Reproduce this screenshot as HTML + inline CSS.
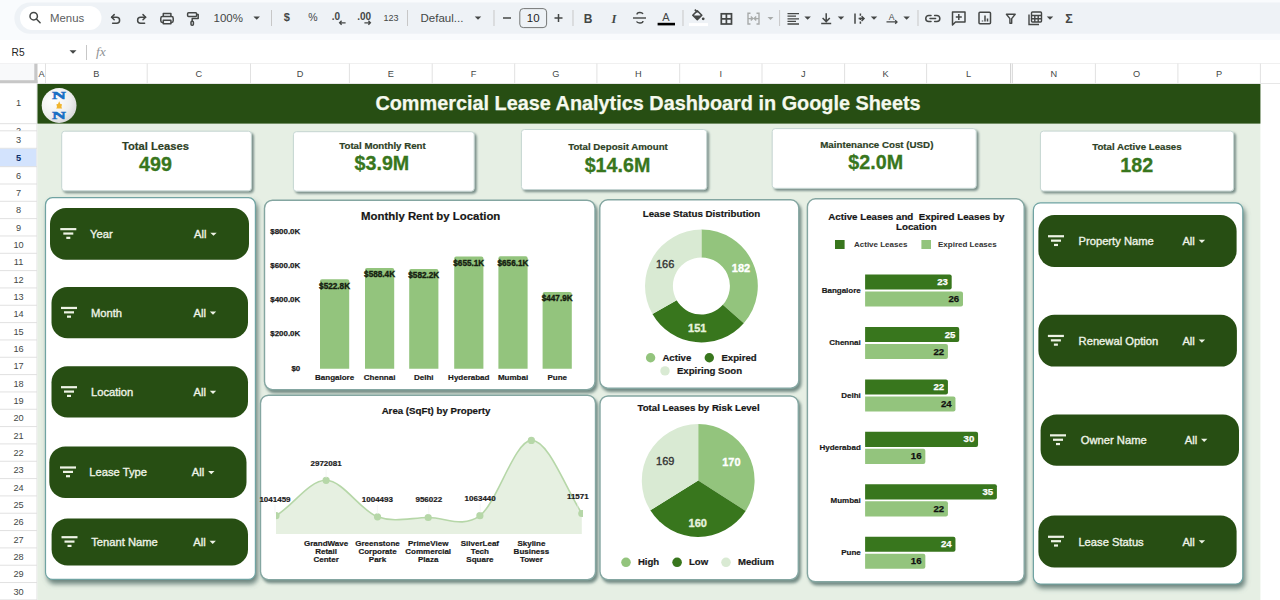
<!DOCTYPE html>
<html><head><meta charset="utf-8"><title>Commercial Lease Analytics Dashboard</title>
<style>
html,body{margin:0;padding:0;background:#ffffff;overflow:hidden;}
body{width:1280px;height:600px;font-family:"Liberation Sans", sans-serif;}
svg{display:block;}
</style></head><body>
<svg width="1280" height="600" viewBox="0 0 1280 600">
<rect x="0.00" y="0.00" width="1280.00" height="64.00" rx="0" fill="#f9fbfd" />
<path d="M30,2.5 H1280 V33.8 H30 A15.65,15.65 0 0 1 30,2.5 Z" fill="#eef2f6"/>
<rect x="20.00" y="6.00" width="81.50" height="24.00" rx="12" fill="#ffffff" />
<g stroke="#444746" stroke-width="1.5" fill="none"><circle cx="33.7" cy="16.2" r="3.7"/><line x1="36.4" y1="18.9" x2="40.1" y2="22.7" stroke-linecap="round"/></g>
<text x="50.00" y="21.80" font-size="11.4" fill="#5b5e61" font-weight="normal" text-anchor="start" style="font-family:'Liberation Sans', sans-serif;" >Menus</text>
<g stroke="#444746" stroke-width="1.5" fill="none" stroke-linecap="round" stroke-linejoin="round"><path d="M111.6,17.2 h5 a3,3 0 0 1 0,6 h-4"/><path d="M114.2,14.6 l-2.6,2.6 l2.6,2.6"/><path d="M145.6,17.2 h-5 a3,3 0 0 0 0,6 h4"/><path d="M143,14.6 l2.6,2.6 l-2.6,2.6"/></g>
<g stroke="#444746" stroke-width="1.5" fill="none" stroke-linejoin="round"><path d="M163.3,16.8 v-3.4 h7.6 v3.4"/><rect x="160.8" y="16.6" width="12.4" height="5.8" rx="1.6"/><path d="M163.3,20.2 h7.6 v3.6 h-7.6 z" fill="#eef2f6"/></g>
<g stroke="#444746" stroke-width="1.5" fill="none" stroke-linejoin="round"><rect x="187.6" y="12.8" width="9" height="3.6" rx="1"/><path d="M196.6,14.6 h1.6 v4 h-6 v2.6"/><rect x="191" y="21.2" width="2.4" height="4" rx="1"/></g>
<text x="213.50" y="22.40" font-size="11.5" fill="#444746" font-weight="normal" text-anchor="start" style="font-family:'Liberation Sans', sans-serif;" >100%</text>
<path d="M253.45,16.55 h6.5 l-3.25,3.3 z" fill="#444746"/>
<line x1="271.5" y1="10" x2="271.5" y2="26" stroke="#c7c7c7" stroke-width="1"/>
<text x="286.90" y="21.20" font-size="11" fill="#444746" font-weight="bold" text-anchor="middle" style="font-family:'Liberation Sans', sans-serif;" >$</text>
<text x="312.80" y="21.20" font-size="10.5" fill="#444746" font-weight="normal" text-anchor="middle" style="font-family:'Liberation Sans', sans-serif;" >%</text>
<text x="336.00" y="19.80" font-size="10" fill="#444746" font-weight="bold" text-anchor="middle" style="font-family:'Liberation Sans', sans-serif;" >.0</text>
<g stroke="#444746" stroke-width="1.3" fill="none"><path d="M345.6,22.8 h-6 m2,-2 l-2,2 l2,2"/></g>
<text x="364.20" y="19.80" font-size="10" fill="#444746" font-weight="bold" text-anchor="middle" style="font-family:'Liberation Sans', sans-serif;" >.00</text>
<g stroke="#444746" stroke-width="1.3" fill="none"><path d="M364.4,22.8 h6 m-2,-2 l2,2 l-2,2"/></g>
<text x="391.00" y="20.90" font-size="9.0" fill="#444746" font-weight="normal" text-anchor="middle" style="font-family:'Liberation Sans', sans-serif;" >123</text>
<line x1="407.5" y1="10" x2="407.5" y2="26" stroke="#c7c7c7" stroke-width="1"/>
<text x="420.50" y="22.00" font-size="11.5" fill="#444746" font-weight="normal" text-anchor="start" style="font-family:'Liberation Sans', sans-serif;" >Defaul...</text>
<path d="M474.75,16.55 h6.5 l-3.25,3.3 z" fill="#444746"/>
<line x1="494" y1="10" x2="494" y2="26" stroke="#c7c7c7" stroke-width="1"/>
<line x1="503" y1="18" x2="511" y2="18" stroke="#444746" stroke-width="1.5"/>
<rect x="519.8" y="8.6" width="26.8" height="19" rx="3.5" fill="none" stroke="#747775" stroke-width="1"/>
<text x="533.20" y="22.20" font-size="11.5" fill="#1f1f1f" font-weight="normal" text-anchor="middle" style="font-family:'Liberation Sans', sans-serif;" >10</text>
<path d="M554.5,18 h8 M558.5,14 v8" stroke="#444746" stroke-width="1.5"/>
<line x1="573" y1="10" x2="573" y2="26" stroke="#c7c7c7" stroke-width="1"/>
<text x="588.00" y="22.50" font-size="12" fill="#444746" font-weight="bold" text-anchor="middle" style="font-family:'Liberation Sans', sans-serif;" >B</text>
<text x="614.00" y="22.50" font-size="12.5" fill="#444746" font-weight="bold" text-anchor="middle" style="font-family:'Liberation Serif', serif;font-style:italic" >I</text>
<g stroke="#444746" stroke-width="1.4" fill="none"><path d="M633,18 h13"/><path d="M643,14 c-1,-2 -6,-2 -6,0.5"/><path d="M636.5,21.5 c1,2 6.5,2 6.5,-0.5"/></g>
<text x="666.00" y="21.00" font-size="11" fill="#444746" font-weight="normal" text-anchor="middle" style="font-family:'Liberation Sans', sans-serif;" >A</text>
<rect x="657.60" y="22.80" width="17.40" height="2.60" rx="0" fill="#000000" />
<line x1="683" y1="10" x2="683" y2="26" stroke="#c7c7c7" stroke-width="1"/>
<g stroke="#444746" stroke-width="1.6" fill="none" stroke-linejoin="round"><path d="M692.8,15.2 L697.3,10.8 L701.8,15.2 L697.3,19.6 Z"/><path d="M694.8,9.6 L697.6,12.4"/></g>
<path d="M693.6,15.6 h7.6 l-3.9,3.6 z" fill="#444746"/><circle cx="703.2" cy="18.8" r="1.4" fill="#444746"/>
<rect x="689.00" y="23.10" width="19.00" height="3.00" rx="0" fill="#ffffff" />
<g stroke="#444746" stroke-width="1.7" fill="none"><rect x="721.3" y="13.8" width="10.2" height="10.2"/><path d="M726.4,13.8 v10.2 M721.3,18.9 h10.2"/></g>
<g stroke="#a8abaa" stroke-width="1.4" fill="none"><path d="M750.5,13.2 h-2.5 v10.8 h2.5 M756.5,13.2 h2.5 v10.8 h-2.5 M748.5,18.6 h4 M750.8,16.6 l2,2 l-2,2 M758.5,18.6 h-4 M756.2,16.6 l-2,2 l2,2"/></g>
<path d="M767.50,16.90 h6 l-3.0,3 z" fill="#a8abaa"/>
<line x1="779.6" y1="10" x2="779.6" y2="26" stroke="#c7c7c7" stroke-width="1"/>
<g stroke="#444746" stroke-width="1.3"><path d="M787.5,13.6 h11.5 M787.5,16.2 h8.5 M787.5,18.8 h11.5 M787.5,21.4 h8.5 M787.5,24.0 h11.5"/></g>
<path d="M804.35,16.55 h6.5 l-3.25,3.3 z" fill="#444746"/>
<g stroke="#444746" stroke-width="1.5" fill="none"><path d="M826.2,13.2 v8 M822.6,18 l3.6,3.6 l3.6,-3.6 M821.2,23.6 h10"/></g>
<path d="M837.75,16.55 h6.5 l-3.25,3.3 z" fill="#444746"/>
<g stroke="#444746" stroke-width="1.5" fill="none"><path d="M855,13.4 v10.4 M860.4,13.4 v2.4 M860.4,17.4 v2.6 M860.4,21.6 v2.2 M858.6,18.6 h5.4 M861.6,16.2 l2.4,2.4 l-2.4,2.4"/></g>
<path d="M870.75,16.55 h6.5 l-3.25,3.3 z" fill="#444746"/>
<text x="891.50" y="19.60" font-size="8.6" fill="#444746" font-weight="normal" text-anchor="middle" style="font-family:'Liberation Sans', sans-serif;" >A</text>
<g stroke="#444746" stroke-width="1.3" fill="none"><path d="M886.5,21.9 h10.5 M895.2,20.1 l1.8,1.8 l-1.8,1.8"/></g>
<path d="M903.35,16.55 h6.5 l-3.25,3.3 z" fill="#444746"/>
<line x1="918" y1="10" x2="918" y2="26" stroke="#c7c7c7" stroke-width="1"/>
<g stroke="#444746" stroke-width="1.5" fill="none" stroke-linecap="round"><path d="M931,15.4 h-2.2 a3.05,3.05 0 0 0 0,6.1 h2.2 M934.6,15.4 h2.2 a3.05,3.05 0 0 1 0,6.1 h-2.2 M930,18.45 h5.6"/></g>
<g stroke="#444746" stroke-width="1.5" fill="none" stroke-linejoin="round"><path d="M952.5,12 h12.5 v10 h-9.5 l-3,3 z"/><path d="M958.8,14 v6 M955.8,17 h6"/></g>
<g stroke="#444746" stroke-width="1.5" fill="none"><rect x="979" y="12.3" width="11.5" height="11.5" rx="1"/><path d="M982.5,20.5 v1 M985,15.5 v6 M987.5,18.5 v3"/></g>
<path d="M1006.4,14.3 h8.8 l-3.5,4.3 v4.6 h-1.8 v-4.6 z" fill="none" stroke="#444746" stroke-width="1.4" stroke-linejoin="round"/>
<g stroke="#444746" stroke-width="1.4" fill="none"><path d="M1029,14.5 v10 h10"/><rect x="1031.5" y="12" width="10" height="10" rx="1"/><path d="M1031.5,15.5 h10 M1031.5,18.8 h10 M1034.8,15.5 v6.5 M1038.2,15.5 v6.5"/></g>
<path d="M1046.75,16.55 h6.5 l-3.25,3.3 z" fill="#444746"/>
<text x="1069.00" y="22.50" font-size="12.5" fill="#444746" font-weight="bold" text-anchor="middle" style="font-family:'Liberation Sans', sans-serif;" >Σ</text>
<rect x="0.00" y="40.00" width="1280.00" height="23.00" rx="0" fill="#ffffff" />
<text x="11.60" y="55.60" font-size="10.2" fill="#1f1f1f" font-weight="normal" text-anchor="start" style="font-family:'Liberation Sans', sans-serif;" >R5</text>
<path d="M69.50,50.25 h7 l-3.5,3.5 z" fill="#444746"/>
<line x1="86.5" y1="45" x2="86.5" y2="60" stroke="#c7c7c7" stroke-width="1"/>
<text x="96.00" y="56.20" font-size="13.5" fill="#8f9295" font-weight="normal" text-anchor="start" style="font-family:'Liberation Serif', serif;font-style:italic" >fx</text>
<rect x="0.00" y="63.00" width="1280.00" height="1.00" rx="0" fill="#e0e0e0" />
<rect x="0.00" y="63.50" width="1280.00" height="20.00" rx="0" fill="#ffffff" />
<rect x="0.00" y="63.70" width="37.00" height="19.50" rx="0" fill="#f8f9fa" />
<rect x="0.00" y="80.20" width="37.50" height="3.20" rx="0" fill="#c7c7c7" />
<rect x="34.30" y="63.70" width="3.20" height="19.60" rx="0" fill="#c7c7c7" />
<line x1="45.50" y1="63.5" x2="45.50" y2="83.5" stroke="#e1e1e1" stroke-width="1"/>
<text x="41.50" y="76.50" font-size="9.2" fill="#444746" font-weight="normal" text-anchor="middle" style="font-family:'Liberation Sans', sans-serif;" >A</text>
<line x1="147.20" y1="63.5" x2="147.20" y2="83.5" stroke="#e1e1e1" stroke-width="1"/>
<text x="96.35" y="76.50" font-size="9.2" fill="#444746" font-weight="normal" text-anchor="middle" style="font-family:'Liberation Sans', sans-serif;" >B</text>
<line x1="250.50" y1="63.5" x2="250.50" y2="83.5" stroke="#e1e1e1" stroke-width="1"/>
<text x="198.85" y="76.50" font-size="9.2" fill="#444746" font-weight="normal" text-anchor="middle" style="font-family:'Liberation Sans', sans-serif;" >C</text>
<line x1="349.40" y1="63.5" x2="349.40" y2="83.5" stroke="#e1e1e1" stroke-width="1"/>
<text x="299.95" y="76.50" font-size="9.2" fill="#444746" font-weight="normal" text-anchor="middle" style="font-family:'Liberation Sans', sans-serif;" >D</text>
<line x1="432.20" y1="63.5" x2="432.20" y2="83.5" stroke="#e1e1e1" stroke-width="1"/>
<text x="390.80" y="76.50" font-size="9.2" fill="#444746" font-weight="normal" text-anchor="middle" style="font-family:'Liberation Sans', sans-serif;" >E</text>
<line x1="514.70" y1="63.5" x2="514.70" y2="83.5" stroke="#e1e1e1" stroke-width="1"/>
<text x="473.45" y="76.50" font-size="9.2" fill="#444746" font-weight="normal" text-anchor="middle" style="font-family:'Liberation Sans', sans-serif;" >F</text>
<line x1="596.90" y1="63.5" x2="596.90" y2="83.5" stroke="#e1e1e1" stroke-width="1"/>
<text x="555.80" y="76.50" font-size="9.2" fill="#444746" font-weight="normal" text-anchor="middle" style="font-family:'Liberation Sans', sans-serif;" >G</text>
<line x1="679.70" y1="63.5" x2="679.70" y2="83.5" stroke="#e1e1e1" stroke-width="1"/>
<text x="638.30" y="76.50" font-size="9.2" fill="#444746" font-weight="normal" text-anchor="middle" style="font-family:'Liberation Sans', sans-serif;" >H</text>
<line x1="762.00" y1="63.5" x2="762.00" y2="83.5" stroke="#e1e1e1" stroke-width="1"/>
<text x="720.85" y="76.50" font-size="9.2" fill="#444746" font-weight="normal" text-anchor="middle" style="font-family:'Liberation Sans', sans-serif;" >I</text>
<line x1="844.60" y1="63.5" x2="844.60" y2="83.5" stroke="#e1e1e1" stroke-width="1"/>
<text x="803.30" y="76.50" font-size="9.2" fill="#444746" font-weight="normal" text-anchor="middle" style="font-family:'Liberation Sans', sans-serif;" >J</text>
<line x1="926.60" y1="63.5" x2="926.60" y2="83.5" stroke="#e1e1e1" stroke-width="1"/>
<text x="885.60" y="76.50" font-size="9.2" fill="#444746" font-weight="normal" text-anchor="middle" style="font-family:'Liberation Sans', sans-serif;" >K</text>
<line x1="1010.50" y1="63.5" x2="1010.50" y2="83.5" stroke="#e1e1e1" stroke-width="1"/>
<text x="968.55" y="76.50" font-size="9.2" fill="#444746" font-weight="normal" text-anchor="middle" style="font-family:'Liberation Sans', sans-serif;" >L</text>
<line x1="1095.40" y1="63.5" x2="1095.40" y2="83.5" stroke="#e1e1e1" stroke-width="1"/>
<text x="1053.85" y="76.50" font-size="9.2" fill="#444746" font-weight="normal" text-anchor="middle" style="font-family:'Liberation Sans', sans-serif;" >N</text>
<line x1="1177.90" y1="63.5" x2="1177.90" y2="83.5" stroke="#e1e1e1" stroke-width="1"/>
<text x="1136.65" y="76.50" font-size="9.2" fill="#444746" font-weight="normal" text-anchor="middle" style="font-family:'Liberation Sans', sans-serif;" >O</text>
<line x1="1260.40" y1="63.5" x2="1260.40" y2="83.5" stroke="#e1e1e1" stroke-width="1"/>
<text x="1219.15" y="76.50" font-size="9.2" fill="#444746" font-weight="normal" text-anchor="middle" style="font-family:'Liberation Sans', sans-serif;" >P</text>
<line x1="1400.00" y1="63.5" x2="1400.00" y2="83.5" stroke="#e1e1e1" stroke-width="1"/>
<line x1="1010.5" y1="63.5" x2="1010.5" y2="83.5" stroke="#d5d5d5" stroke-width="1"/>
<line x1="1012.3" y1="63.5" x2="1012.3" y2="83.5" stroke="#d5d5d5" stroke-width="1"/>
<rect x="0.00" y="83.00" width="1280.00" height="0.80" rx="0" fill="#e1e1e1" />
<rect x="0.00" y="83.50" width="37.00" height="600.00" rx="0" fill="#ffffff" />
<line x1="0" y1="123.70" x2="37" y2="123.70" stroke="#e1e1e1" stroke-width="1"/>
<text x="18.50" y="105.90" font-size="9.2" fill="#444746" font-weight="normal" text-anchor="middle" style="font-family:'Liberation Sans', sans-serif;" >1</text>
<line x1="0" y1="130.80" x2="37" y2="130.80" stroke="#e1e1e1" stroke-width="1"/>
<clipPath id="r2clip"><rect x="0" y="124.2" width="37" height="6.6000000000000085"/></clipPath>
<text x="18.50" y="134.10" font-size="9.2" fill="#444746" font-weight="normal" text-anchor="middle" style="font-family:'Liberation Sans', sans-serif;" clip-path="url(#r2clip)">2</text>
<line x1="0" y1="148.30" x2="37" y2="148.30" stroke="#e1e1e1" stroke-width="1"/>
<text x="18.50" y="142.85" font-size="9.2" fill="#444746" font-weight="normal" text-anchor="middle" style="font-family:'Liberation Sans', sans-serif;" >3</text>
<rect x="0.00" y="148.80" width="36.50" height="17.90" rx="0" fill="#d3e3fd" />
<line x1="0" y1="166.70" x2="37" y2="166.70" stroke="#e1e1e1" stroke-width="1"/>
<text x="18.50" y="160.80" font-size="9.2" fill="#0b2f6b" font-weight="bold" text-anchor="middle" style="font-family:'Liberation Sans', sans-serif;" >5</text>
<line x1="0" y1="184.00" x2="37" y2="184.00" stroke="#e1e1e1" stroke-width="1"/>
<text x="18.50" y="178.65" font-size="9.2" fill="#444746" font-weight="normal" text-anchor="middle" style="font-family:'Liberation Sans', sans-serif;" >6</text>
<line x1="0" y1="201.30" x2="37" y2="201.30" stroke="#e1e1e1" stroke-width="1"/>
<text x="18.50" y="195.95" font-size="9.2" fill="#444746" font-weight="normal" text-anchor="middle" style="font-family:'Liberation Sans', sans-serif;" >7</text>
<line x1="0" y1="218.63" x2="37" y2="218.63" stroke="#e1e1e1" stroke-width="1"/>
<text x="18.50" y="213.27" font-size="9.2" fill="#444746" font-weight="normal" text-anchor="middle" style="font-family:'Liberation Sans', sans-serif;" >8</text>
<line x1="0" y1="235.96" x2="37" y2="235.96" stroke="#e1e1e1" stroke-width="1"/>
<text x="18.50" y="230.59" font-size="9.2" fill="#444746" font-weight="normal" text-anchor="middle" style="font-family:'Liberation Sans', sans-serif;" >9</text>
<line x1="0" y1="253.29" x2="37" y2="253.29" stroke="#e1e1e1" stroke-width="1"/>
<text x="18.50" y="247.93" font-size="9.2" fill="#444746" font-weight="normal" text-anchor="middle" style="font-family:'Liberation Sans', sans-serif;" >10</text>
<line x1="0" y1="270.62" x2="37" y2="270.62" stroke="#e1e1e1" stroke-width="1"/>
<text x="18.50" y="265.26" font-size="9.2" fill="#444746" font-weight="normal" text-anchor="middle" style="font-family:'Liberation Sans', sans-serif;" >11</text>
<line x1="0" y1="287.95" x2="37" y2="287.95" stroke="#e1e1e1" stroke-width="1"/>
<text x="18.50" y="282.58" font-size="9.2" fill="#444746" font-weight="normal" text-anchor="middle" style="font-family:'Liberation Sans', sans-serif;" >12</text>
<line x1="0" y1="305.28" x2="37" y2="305.28" stroke="#e1e1e1" stroke-width="1"/>
<text x="18.50" y="299.92" font-size="9.2" fill="#444746" font-weight="normal" text-anchor="middle" style="font-family:'Liberation Sans', sans-serif;" >13</text>
<line x1="0" y1="322.61" x2="37" y2="322.61" stroke="#e1e1e1" stroke-width="1"/>
<text x="18.50" y="317.24" font-size="9.2" fill="#444746" font-weight="normal" text-anchor="middle" style="font-family:'Liberation Sans', sans-serif;" >14</text>
<line x1="0" y1="339.94" x2="37" y2="339.94" stroke="#e1e1e1" stroke-width="1"/>
<text x="18.50" y="334.57" font-size="9.2" fill="#444746" font-weight="normal" text-anchor="middle" style="font-family:'Liberation Sans', sans-serif;" >15</text>
<line x1="0" y1="357.27" x2="37" y2="357.27" stroke="#e1e1e1" stroke-width="1"/>
<text x="18.50" y="351.91" font-size="9.2" fill="#444746" font-weight="normal" text-anchor="middle" style="font-family:'Liberation Sans', sans-serif;" >16</text>
<line x1="0" y1="374.60" x2="37" y2="374.60" stroke="#e1e1e1" stroke-width="1"/>
<text x="18.50" y="369.23" font-size="9.2" fill="#444746" font-weight="normal" text-anchor="middle" style="font-family:'Liberation Sans', sans-serif;" >17</text>
<line x1="0" y1="391.93" x2="37" y2="391.93" stroke="#e1e1e1" stroke-width="1"/>
<text x="18.50" y="386.56" font-size="9.2" fill="#444746" font-weight="normal" text-anchor="middle" style="font-family:'Liberation Sans', sans-serif;" >18</text>
<line x1="0" y1="409.26" x2="37" y2="409.26" stroke="#e1e1e1" stroke-width="1"/>
<text x="18.50" y="403.90" font-size="9.2" fill="#444746" font-weight="normal" text-anchor="middle" style="font-family:'Liberation Sans', sans-serif;" >19</text>
<line x1="0" y1="426.59" x2="37" y2="426.59" stroke="#e1e1e1" stroke-width="1"/>
<text x="18.50" y="421.22" font-size="9.2" fill="#444746" font-weight="normal" text-anchor="middle" style="font-family:'Liberation Sans', sans-serif;" >20</text>
<line x1="0" y1="443.92" x2="37" y2="443.92" stroke="#e1e1e1" stroke-width="1"/>
<text x="18.50" y="438.56" font-size="9.2" fill="#444746" font-weight="normal" text-anchor="middle" style="font-family:'Liberation Sans', sans-serif;" >21</text>
<line x1="0" y1="461.25" x2="37" y2="461.25" stroke="#e1e1e1" stroke-width="1"/>
<text x="18.50" y="455.88" font-size="9.2" fill="#444746" font-weight="normal" text-anchor="middle" style="font-family:'Liberation Sans', sans-serif;" >22</text>
<line x1="0" y1="478.58" x2="37" y2="478.58" stroke="#e1e1e1" stroke-width="1"/>
<text x="18.50" y="473.21" font-size="9.2" fill="#444746" font-weight="normal" text-anchor="middle" style="font-family:'Liberation Sans', sans-serif;" >23</text>
<line x1="0" y1="495.91" x2="37" y2="495.91" stroke="#e1e1e1" stroke-width="1"/>
<text x="18.50" y="490.55" font-size="9.2" fill="#444746" font-weight="normal" text-anchor="middle" style="font-family:'Liberation Sans', sans-serif;" >24</text>
<line x1="0" y1="513.24" x2="37" y2="513.24" stroke="#e1e1e1" stroke-width="1"/>
<text x="18.50" y="507.88" font-size="9.2" fill="#444746" font-weight="normal" text-anchor="middle" style="font-family:'Liberation Sans', sans-serif;" >25</text>
<line x1="0" y1="530.57" x2="37" y2="530.57" stroke="#e1e1e1" stroke-width="1"/>
<text x="18.50" y="525.20" font-size="9.2" fill="#444746" font-weight="normal" text-anchor="middle" style="font-family:'Liberation Sans', sans-serif;" >26</text>
<line x1="0" y1="547.90" x2="37" y2="547.90" stroke="#e1e1e1" stroke-width="1"/>
<text x="18.50" y="542.53" font-size="9.2" fill="#444746" font-weight="normal" text-anchor="middle" style="font-family:'Liberation Sans', sans-serif;" >27</text>
<line x1="0" y1="565.23" x2="37" y2="565.23" stroke="#e1e1e1" stroke-width="1"/>
<text x="18.50" y="559.87" font-size="9.2" fill="#444746" font-weight="normal" text-anchor="middle" style="font-family:'Liberation Sans', sans-serif;" >28</text>
<line x1="0" y1="582.56" x2="37" y2="582.56" stroke="#e1e1e1" stroke-width="1"/>
<text x="18.50" y="577.19" font-size="9.2" fill="#444746" font-weight="normal" text-anchor="middle" style="font-family:'Liberation Sans', sans-serif;" >29</text>
<line x1="0" y1="599.89" x2="37" y2="599.89" stroke="#e1e1e1" stroke-width="1"/>
<text x="18.50" y="594.52" font-size="9.2" fill="#444746" font-weight="normal" text-anchor="middle" style="font-family:'Liberation Sans', sans-serif;" >30</text>
<line x1="0" y1="617.22" x2="37" y2="617.22" stroke="#e1e1e1" stroke-width="1"/>
<text x="18.50" y="611.86" font-size="9.2" fill="#444746" font-weight="normal" text-anchor="middle" style="font-family:'Liberation Sans', sans-serif;" >31</text>
<line x1="37" y1="83.5" x2="37" y2="600" stroke="#e1e1e1" stroke-width="1"/>
<rect x="37.50" y="84.00" width="1222.90" height="516.00" rx="0" fill="#e6efe4" />
<rect x="37.50" y="84.00" width="1222.90" height="39.60" rx="0" fill="#274e13" />
<text x="648.00" y="109.60" font-size="19.85" fill="#f5f9ee" font-weight="bold" text-anchor="middle" style="font-family:'Liberation Sans', sans-serif;" stroke="#f5f9ee" stroke-width="0.25">Commercial Lease Analytics Dashboard in Google Sheets</text>
<defs><radialGradient id="lg" cx="0.35" cy="0.35" r="0.8"><stop offset="0" stop-color="#ffffff"/><stop offset="0.6" stop-color="#eeeeee"/><stop offset="1" stop-color="#cfcfcf"/></radialGradient></defs>
<circle cx="59.1" cy="105.5" r="17.4" fill="url(#lg)"/>
<g transform="translate(59,99.3) scale(1.75,1)"><text x="0" y="0" font-size="11" fill="#1a6fc4" stroke="#1a6fc4" stroke-width="0.5" font-weight="bold" text-anchor="middle" style="font-family:'Liberation Serif', serif">N</text></g>
<g transform="translate(59,118.8) scale(1.75,1)"><text x="0" y="0" font-size="11" fill="#1a6fc4" stroke="#1a6fc4" stroke-width="0.5" font-weight="bold" text-anchor="middle" style="font-family:'Liberation Serif', serif">N</text></g>
<path d="M59.2,101.3 l1.2,2.6 l1.6,0.4 l-0.6,2.6 l0.8,1.6 h-6 l0.8,-1.6 l-0.6,-2.6 l1.6,-0.4 z" fill="#f1b52e"/>
<defs>
<filter id="sh" x="-5%" y="-5%" width="115%" height="115%">
  <feGaussianBlur in="SourceAlpha" stdDeviation="1.6"/>
  <feOffset dx="1.8" dy="2.6" result="ob"/>
  <feFlood flood-color="#58746f" flood-opacity="0.8"/>
  <feComposite in2="ob" operator="in"/>
  <feMerge><feMergeNode/><feMergeNode in="SourceGraphic"/></feMerge>
</filter>
<filter id="shp" x="-5%" y="-5%" width="115%" height="115%">
  <feGaussianBlur in="SourceAlpha" stdDeviation="2.4"/>
  <feOffset dx="2" dy="4" result="ob"/>
  <feFlood flood-color="#56716c" flood-opacity="0.85"/>
  <feComposite in2="ob" operator="in"/>
  <feMerge><feMergeNode/><feMergeNode in="SourceGraphic"/></feMerge>
</filter>
<filter id="shk" x="-5%" y="-5%" width="115%" height="125%">
  <feGaussianBlur in="SourceAlpha" stdDeviation="1"/>
  <feOffset dx="1.5" dy="1.5" result="ob"/>
  <feFlood flood-color="#5f7773" flood-opacity="0.8"/>
  <feComposite in2="ob" operator="in"/>
  <feMerge><feMergeNode/><feMergeNode in="SourceGraphic"/></feMerge>
</filter>
</defs>
<rect x="61.70" y="131.20" width="189.70" height="59.60" rx="3" fill="#ffffff" stroke="#c5d6d2" stroke-width="1" filter="url(#shk)"/>
<text x="155.40" y="149.50" font-size="11.2" fill="#2d4124" font-weight="bold" text-anchor="middle" style="font-family:'Liberation Sans', sans-serif;" stroke="#2d4124" stroke-width="0.2">Total Leases</text>
<text x="155.50" y="171.20" font-size="19.7" fill="#38761d" font-weight="bold" text-anchor="middle" style="font-family:'Liberation Sans', sans-serif;" stroke="#38761d" stroke-width="0.3">499</text>
<rect x="293.40" y="131.70" width="180.80" height="59.50" rx="3" fill="#ffffff" stroke="#c5d6d2" stroke-width="1" filter="url(#shk)"/>
<text x="382.50" y="149.20" font-size="9.7" fill="#2d4124" font-weight="bold" text-anchor="middle" style="font-family:'Liberation Sans', sans-serif;" stroke="#2d4124" stroke-width="0.2">Total Monthly Rent</text>
<text x="381.90" y="170.20" font-size="19.7" fill="#38761d" font-weight="bold" text-anchor="middle" style="font-family:'Liberation Sans', sans-serif;" stroke="#38761d" stroke-width="0.3">$3.9M</text>
<rect x="521.40" y="129.50" width="185.30" height="60.10" rx="3" fill="#ffffff" stroke="#c5d6d2" stroke-width="1" filter="url(#shk)"/>
<text x="618.00" y="150.20" font-size="9.7" fill="#2d4124" font-weight="bold" text-anchor="middle" style="font-family:'Liberation Sans', sans-serif;" stroke="#2d4124" stroke-width="0.2">Total Deposit Amount</text>
<text x="617.50" y="171.90" font-size="19.7" fill="#38761d" font-weight="bold" text-anchor="middle" style="font-family:'Liberation Sans', sans-serif;" stroke="#38761d" stroke-width="0.3">$14.6M</text>
<rect x="772.20" y="128.60" width="204.00" height="59.70" rx="3" fill="#ffffff" stroke="#c5d6d2" stroke-width="1" filter="url(#shk)"/>
<text x="876.80" y="148.40" font-size="9.75" fill="#2d4124" font-weight="bold" text-anchor="middle" style="font-family:'Liberation Sans', sans-serif;" stroke="#2d4124" stroke-width="0.2">Maintenance Cost (USD)</text>
<text x="875.70" y="169.40" font-size="19.7" fill="#38761d" font-weight="bold" text-anchor="middle" style="font-family:'Liberation Sans', sans-serif;" stroke="#38761d" stroke-width="0.3">$2.0M</text>
<rect x="1040.40" y="131.10" width="193.20" height="59.90" rx="3" fill="#ffffff" stroke="#c5d6d2" stroke-width="1" filter="url(#shk)"/>
<text x="1136.90" y="150.20" font-size="9.7" fill="#2d4124" font-weight="bold" text-anchor="middle" style="font-family:'Liberation Sans', sans-serif;" stroke="#2d4124" stroke-width="0.2">Total Active Leases</text>
<text x="1136.80" y="171.60" font-size="19.7" fill="#38761d" font-weight="bold" text-anchor="middle" style="font-family:'Liberation Sans', sans-serif;" stroke="#38761d" stroke-width="0.3">182</text>
<rect x="45.50" y="197.70" width="209.90" height="381.70" rx="7" fill="#ffffff" stroke="#6fa3a2" stroke-width="1.2" filter="url(#shp)"/>
<rect x="1033.40" y="202.80" width="209.40" height="381.20" rx="7" fill="#ffffff" stroke="#6fa3a2" stroke-width="1.2" filter="url(#shp)"/>
<rect x="50.00" y="208.00" width="199.00" height="51.70" rx="16" fill="#274e13"/>
<rect x="60.30" y="228.05" width="16.00" height="2.20" rx="0" fill="#eef3e6" />
<rect x="63.30" y="232.45" width="10.00" height="2.20" rx="0" fill="#eef3e6" />
<rect x="66.30" y="236.75" width="4.00" height="2.20" rx="0" fill="#eef3e6" />
<text x="90.00" y="237.85" font-size="11.2" fill="#eef3e6" font-weight="normal" text-anchor="start" style="font-family:'Liberation Sans', sans-serif;" stroke="#eef3e6" stroke-width="0.35">Year</text>
<text x="194.00" y="237.85" font-size="11.2" fill="#eef3e6" font-weight="normal" text-anchor="start" style="font-family:'Liberation Sans', sans-serif;" stroke="#eef3e6" stroke-width="0.35">All</text>
<path d="M210.30,232.65 h6.4 l-3.2,3.2 z" fill="#eef3e6"/>
<rect x="51.50" y="287.00" width="196.50" height="51.30" rx="16" fill="#274e13"/>
<rect x="61.00" y="306.85" width="16.00" height="2.20" rx="0" fill="#eef3e6" />
<rect x="64.00" y="311.25" width="10.00" height="2.20" rx="0" fill="#eef3e6" />
<rect x="67.00" y="315.55" width="4.00" height="2.20" rx="0" fill="#eef3e6" />
<text x="91.00" y="316.65" font-size="11.2" fill="#eef3e6" font-weight="normal" text-anchor="start" style="font-family:'Liberation Sans', sans-serif;" stroke="#eef3e6" stroke-width="0.35">Month</text>
<text x="193.50" y="316.65" font-size="11.2" fill="#eef3e6" font-weight="normal" text-anchor="start" style="font-family:'Liberation Sans', sans-serif;" stroke="#eef3e6" stroke-width="0.35">All</text>
<path d="M209.80,311.45 h6.4 l-3.2,3.2 z" fill="#eef3e6"/>
<rect x="51.50" y="366.30" width="196.50" height="51.20" rx="16" fill="#274e13"/>
<rect x="61.00" y="386.10" width="16.00" height="2.20" rx="0" fill="#eef3e6" />
<rect x="64.00" y="390.50" width="10.00" height="2.20" rx="0" fill="#eef3e6" />
<rect x="67.00" y="394.80" width="4.00" height="2.20" rx="0" fill="#eef3e6" />
<text x="91.00" y="395.90" font-size="11.2" fill="#eef3e6" font-weight="normal" text-anchor="start" style="font-family:'Liberation Sans', sans-serif;" stroke="#eef3e6" stroke-width="0.35">Location</text>
<text x="193.50" y="395.90" font-size="11.2" fill="#eef3e6" font-weight="normal" text-anchor="start" style="font-family:'Liberation Sans', sans-serif;" stroke="#eef3e6" stroke-width="0.35">All</text>
<path d="M209.80,390.70 h6.4 l-3.2,3.2 z" fill="#eef3e6"/>
<rect x="49.30" y="446.40" width="197.20" height="51.60" rx="16" fill="#274e13"/>
<rect x="60.00" y="466.40" width="16.00" height="2.20" rx="0" fill="#eef3e6" />
<rect x="63.00" y="470.80" width="10.00" height="2.20" rx="0" fill="#eef3e6" />
<rect x="66.00" y="475.10" width="4.00" height="2.20" rx="0" fill="#eef3e6" />
<text x="89.30" y="476.20" font-size="11.2" fill="#eef3e6" font-weight="normal" text-anchor="start" style="font-family:'Liberation Sans', sans-serif;" stroke="#eef3e6" stroke-width="0.35">Lease Type</text>
<text x="191.80" y="476.20" font-size="11.2" fill="#eef3e6" font-weight="normal" text-anchor="start" style="font-family:'Liberation Sans', sans-serif;" stroke="#eef3e6" stroke-width="0.35">All</text>
<path d="M208.10,471.00 h6.4 l-3.2,3.2 z" fill="#eef3e6"/>
<rect x="51.60" y="518.40" width="196.40" height="47.00" rx="16" fill="#274e13"/>
<rect x="61.50" y="536.10" width="16.00" height="2.20" rx="0" fill="#eef3e6" />
<rect x="64.50" y="540.50" width="10.00" height="2.20" rx="0" fill="#eef3e6" />
<rect x="67.50" y="544.80" width="4.00" height="2.20" rx="0" fill="#eef3e6" />
<text x="91.20" y="545.90" font-size="11.2" fill="#eef3e6" font-weight="normal" text-anchor="start" style="font-family:'Liberation Sans', sans-serif;" stroke="#eef3e6" stroke-width="0.35">Tenant Name</text>
<text x="193.20" y="545.90" font-size="11.2" fill="#eef3e6" font-weight="normal" text-anchor="start" style="font-family:'Liberation Sans', sans-serif;" stroke="#eef3e6" stroke-width="0.35">All</text>
<path d="M209.50,540.70 h6.4 l-3.2,3.2 z" fill="#eef3e6"/>
<rect x="1038.40" y="215.00" width="198.20" height="51.90" rx="16" fill="#274e13"/>
<rect x="1048.00" y="235.15" width="16.00" height="2.20" rx="0" fill="#eef3e6" />
<rect x="1051.00" y="239.55" width="10.00" height="2.20" rx="0" fill="#eef3e6" />
<rect x="1054.00" y="243.85" width="4.00" height="2.20" rx="0" fill="#eef3e6" />
<text x="1078.50" y="244.95" font-size="11.2" fill="#eef3e6" font-weight="normal" text-anchor="start" style="font-family:'Liberation Sans', sans-serif;" stroke="#eef3e6" stroke-width="0.35">Property Name</text>
<text x="1182.40" y="244.95" font-size="11.2" fill="#eef3e6" font-weight="normal" text-anchor="start" style="font-family:'Liberation Sans', sans-serif;" stroke="#eef3e6" stroke-width="0.35">All</text>
<path d="M1198.70,239.75 h6.4 l-3.2,3.2 z" fill="#eef3e6"/>
<rect x="1038.40" y="314.70" width="198.50" height="51.90" rx="16" fill="#274e13"/>
<rect x="1047.90" y="334.85" width="16.00" height="2.20" rx="0" fill="#eef3e6" />
<rect x="1050.90" y="339.25" width="10.00" height="2.20" rx="0" fill="#eef3e6" />
<rect x="1053.90" y="343.55" width="4.00" height="2.20" rx="0" fill="#eef3e6" />
<text x="1078.60" y="344.65" font-size="11.2" fill="#eef3e6" font-weight="normal" text-anchor="start" style="font-family:'Liberation Sans', sans-serif;" stroke="#eef3e6" stroke-width="0.35">Renewal Option</text>
<text x="1182.40" y="344.65" font-size="11.2" fill="#eef3e6" font-weight="normal" text-anchor="start" style="font-family:'Liberation Sans', sans-serif;" stroke="#eef3e6" stroke-width="0.35">All</text>
<path d="M1198.70,339.45 h6.4 l-3.2,3.2 z" fill="#eef3e6"/>
<rect x="1040.60" y="414.40" width="198.40" height="51.30" rx="16" fill="#274e13"/>
<rect x="1050.00" y="434.25" width="16.00" height="2.20" rx="0" fill="#eef3e6" />
<rect x="1053.00" y="438.65" width="10.00" height="2.20" rx="0" fill="#eef3e6" />
<rect x="1056.00" y="442.95" width="4.00" height="2.20" rx="0" fill="#eef3e6" />
<text x="1080.80" y="444.05" font-size="11.2" fill="#eef3e6" font-weight="normal" text-anchor="start" style="font-family:'Liberation Sans', sans-serif;" stroke="#eef3e6" stroke-width="0.35">Owner Name</text>
<text x="1184.70" y="444.05" font-size="11.2" fill="#eef3e6" font-weight="normal" text-anchor="start" style="font-family:'Liberation Sans', sans-serif;" stroke="#eef3e6" stroke-width="0.35">All</text>
<path d="M1201.00,438.85 h6.4 l-3.2,3.2 z" fill="#eef3e6"/>
<rect x="1038.40" y="515.60" width="198.20" height="51.80" rx="16" fill="#274e13"/>
<rect x="1048.00" y="535.70" width="16.00" height="2.20" rx="0" fill="#eef3e6" />
<rect x="1051.00" y="540.10" width="10.00" height="2.20" rx="0" fill="#eef3e6" />
<rect x="1054.00" y="544.40" width="4.00" height="2.20" rx="0" fill="#eef3e6" />
<text x="1078.40" y="545.50" font-size="11.2" fill="#eef3e6" font-weight="normal" text-anchor="start" style="font-family:'Liberation Sans', sans-serif;" stroke="#eef3e6" stroke-width="0.35">Lease Status</text>
<text x="1182.40" y="545.50" font-size="11.2" fill="#eef3e6" font-weight="normal" text-anchor="start" style="font-family:'Liberation Sans', sans-serif;" stroke="#eef3e6" stroke-width="0.35">All</text>
<path d="M1198.70,540.30 h6.4 l-3.2,3.2 z" fill="#eef3e6"/>
<rect x="264.50" y="200.20" width="330.50" height="189.40" rx="8" fill="#ffffff" stroke="#84a6a1" stroke-width="1.4" filter="url(#sh)"/>
<rect x="260.50" y="395.20" width="335.00" height="184.40" rx="8" fill="#ffffff" stroke="#84a6a1" stroke-width="1.4" filter="url(#sh)"/>
<rect x="599.80" y="199.80" width="199.00" height="188.40" rx="8" fill="#ffffff" stroke="#84a6a1" stroke-width="1.4" filter="url(#sh)"/>
<rect x="600.00" y="396.00" width="198.30" height="183.60" rx="8" fill="#ffffff" stroke="#84a6a1" stroke-width="1.4" filter="url(#sh)"/>
<rect x="807.40" y="198.80" width="216.80" height="383.00" rx="8" fill="#ffffff" stroke="#84a6a1" stroke-width="1.4" filter="url(#sh)"/>
<text x="430.70" y="220.20" font-size="11.4" fill="#161616" font-weight="bold" text-anchor="middle" style="font-family:'Liberation Sans', sans-serif;" stroke="#161616" stroke-width="0.2">Monthly Rent by Location</text>
<text x="300.20" y="370.70" font-size="7.9" fill="#1a1a1a" font-weight="bold" text-anchor="end" style="font-family:'Liberation Sans', sans-serif;" stroke="#1a1a1a" stroke-width="0.25">$0</text>
<text x="300.20" y="336.40" font-size="7.9" fill="#1a1a1a" font-weight="bold" text-anchor="end" style="font-family:'Liberation Sans', sans-serif;" stroke="#1a1a1a" stroke-width="0.25">$200.0K</text>
<text x="300.20" y="302.10" font-size="7.9" fill="#1a1a1a" font-weight="bold" text-anchor="end" style="font-family:'Liberation Sans', sans-serif;" stroke="#1a1a1a" stroke-width="0.25">$400.0K</text>
<text x="300.20" y="267.80" font-size="7.9" fill="#1a1a1a" font-weight="bold" text-anchor="end" style="font-family:'Liberation Sans', sans-serif;" stroke="#1a1a1a" stroke-width="0.25">$600.0K</text>
<text x="300.20" y="233.50" font-size="7.9" fill="#1a1a1a" font-weight="bold" text-anchor="end" style="font-family:'Liberation Sans', sans-serif;" stroke="#1a1a1a" stroke-width="0.25">$800.0K</text>
<path d="M320.00,368.80 V281.14 a2,2 0 0 1 2,-2 h25.2 a2,2 0 0 1 2,2 V368.80 Z" fill="#93c47d"/>
<text x="334.60" y="379.80" font-size="8.0" fill="#1a1a1a" font-weight="bold" text-anchor="middle" style="font-family:'Liberation Sans', sans-serif;" stroke="#1a1a1a" stroke-width="0.2">Bangalore</text>
<text x="334.60" y="288.54" font-size="8.2" fill="#15200f" font-weight="bold" text-anchor="middle" style="font-family:'Liberation Sans', sans-serif;" stroke="#15200f" stroke-width="0.35">$522.8K</text>
<path d="M365.00,368.80 V269.89 a2,2 0 0 1 2,-2 h25.2 a2,2 0 0 1 2,2 V368.80 Z" fill="#93c47d"/>
<text x="379.60" y="379.80" font-size="8.0" fill="#1a1a1a" font-weight="bold" text-anchor="middle" style="font-family:'Liberation Sans', sans-serif;" stroke="#1a1a1a" stroke-width="0.2">Chennai</text>
<text x="379.60" y="277.29" font-size="8.2" fill="#15200f" font-weight="bold" text-anchor="middle" style="font-family:'Liberation Sans', sans-serif;" stroke="#15200f" stroke-width="0.35">$588.4K</text>
<path d="M409.20,368.80 V270.95 a2,2 0 0 1 2,-2 h25.2 a2,2 0 0 1 2,2 V368.80 Z" fill="#93c47d"/>
<text x="423.80" y="379.80" font-size="8.0" fill="#1a1a1a" font-weight="bold" text-anchor="middle" style="font-family:'Liberation Sans', sans-serif;" stroke="#1a1a1a" stroke-width="0.2">Delhi</text>
<text x="423.80" y="278.35" font-size="8.2" fill="#15200f" font-weight="bold" text-anchor="middle" style="font-family:'Liberation Sans', sans-serif;" stroke="#15200f" stroke-width="0.35">$582.2K</text>
<path d="M454.20,368.80 V258.45 a2,2 0 0 1 2,-2 h25.2 a2,2 0 0 1 2,2 V368.80 Z" fill="#93c47d"/>
<text x="468.80" y="379.80" font-size="8.0" fill="#1a1a1a" font-weight="bold" text-anchor="middle" style="font-family:'Liberation Sans', sans-serif;" stroke="#1a1a1a" stroke-width="0.2">Hyderabad</text>
<text x="468.80" y="265.85" font-size="8.2" fill="#15200f" font-weight="bold" text-anchor="middle" style="font-family:'Liberation Sans', sans-serif;" stroke="#15200f" stroke-width="0.35">$655.1K</text>
<path d="M498.40,368.80 V258.28 a2,2 0 0 1 2,-2 h25.2 a2,2 0 0 1 2,2 V368.80 Z" fill="#93c47d"/>
<text x="513.00" y="379.80" font-size="8.0" fill="#1a1a1a" font-weight="bold" text-anchor="middle" style="font-family:'Liberation Sans', sans-serif;" stroke="#1a1a1a" stroke-width="0.2">Mumbai</text>
<text x="513.00" y="265.68" font-size="8.2" fill="#15200f" font-weight="bold" text-anchor="middle" style="font-family:'Liberation Sans', sans-serif;" stroke="#15200f" stroke-width="0.35">$656.1K</text>
<path d="M542.60,368.80 V293.99 a2,2 0 0 1 2,-2 h25.2 a2,2 0 0 1 2,2 V368.80 Z" fill="#93c47d"/>
<text x="557.20" y="379.80" font-size="8.0" fill="#1a1a1a" font-weight="bold" text-anchor="middle" style="font-family:'Liberation Sans', sans-serif;" stroke="#1a1a1a" stroke-width="0.2">Pune</text>
<text x="557.20" y="301.39" font-size="8.2" fill="#15200f" font-weight="bold" text-anchor="middle" style="font-family:'Liberation Sans', sans-serif;" stroke="#15200f" stroke-width="0.35">$447.9K</text>
<text x="436.00" y="414.30" font-size="9.7" fill="#161616" font-weight="bold" text-anchor="middle" style="font-family:'Liberation Sans', sans-serif;" stroke="#161616" stroke-width="0.2">Area (SqFt) by Property</text>
<clipPath id="plotclip"><rect x="276" y="380" width="307" height="154"/></clipPath>
<g clip-path="url(#plotclip)"><path d="M276.00,515.70 C292.85,505.75 309.18,480.12 326.10,480.30 C343.02,480.48 360.48,510.60 377.50,516.80 C394.52,523.00 411.13,517.68 428.20,517.50 C445.27,517.32 462.70,528.55 479.90,515.70 C497.10,502.85 514.42,440.77 531.40,440.40 C548.38,440.03 564.87,486.90 581.80,513.50 L581.8,534 L276,534 Z" fill="#e6f0e1"/><path d="M276.00,515.70 C292.85,505.75 309.18,480.12 326.10,480.30 C343.02,480.48 360.48,510.60 377.50,516.80 C394.52,523.00 411.13,517.68 428.20,517.50 C445.27,517.32 462.70,528.55 479.90,515.70 C497.10,502.85 514.42,440.77 531.40,440.40 C548.38,440.03 564.87,486.90 581.80,513.50" fill="none" stroke="#b6d7a8" stroke-width="1.6"/>
<circle cx="276.0" cy="515.7" r="3.6" fill="#b6d7a8"/>
<circle cx="326.1" cy="480.3" r="3.6" fill="#b6d7a8"/>
<circle cx="377.5" cy="516.8" r="3.6" fill="#b6d7a8"/>
<circle cx="428.2" cy="517.5" r="3.6" fill="#b6d7a8"/>
<circle cx="479.9" cy="515.7" r="3.6" fill="#b6d7a8"/>
<circle cx="531.4" cy="440.4" r="3.6" fill="#b6d7a8"/>
<circle cx="581.8" cy="513.5" r="3.6" fill="#b6d7a8"/>
</g>
<line x1="275.00" y1="504.60" x2="275.00" y2="513.60" stroke="#eeeeee" stroke-width="0.6"/>
<text x="275.00" y="501.60" font-size="8.0" fill="#1a1a1a" font-weight="bold" text-anchor="middle" style="font-family:'Liberation Sans', sans-serif;" stroke="#1a1a1a" stroke-width="0.2">1041459</text>
<line x1="326.10" y1="469.00" x2="326.10" y2="478.00" stroke="#eeeeee" stroke-width="0.6"/>
<text x="326.10" y="466.00" font-size="8.0" fill="#1a1a1a" font-weight="bold" text-anchor="middle" style="font-family:'Liberation Sans', sans-serif;" stroke="#1a1a1a" stroke-width="0.2">2972081</text>
<line x1="377.40" y1="505.10" x2="377.40" y2="514.10" stroke="#eeeeee" stroke-width="0.6"/>
<text x="377.40" y="502.10" font-size="8.0" fill="#1a1a1a" font-weight="bold" text-anchor="middle" style="font-family:'Liberation Sans', sans-serif;" stroke="#1a1a1a" stroke-width="0.2">1004493</text>
<line x1="428.80" y1="505.40" x2="428.80" y2="514.40" stroke="#eeeeee" stroke-width="0.6"/>
<text x="428.80" y="502.40" font-size="8.0" fill="#1a1a1a" font-weight="bold" text-anchor="middle" style="font-family:'Liberation Sans', sans-serif;" stroke="#1a1a1a" stroke-width="0.2">956022</text>
<line x1="480.20" y1="503.70" x2="480.20" y2="512.70" stroke="#eeeeee" stroke-width="0.6"/>
<text x="480.20" y="500.70" font-size="8.0" fill="#1a1a1a" font-weight="bold" text-anchor="middle" style="font-family:'Liberation Sans', sans-serif;" stroke="#1a1a1a" stroke-width="0.2">1063440</text>
<line x1="577.80" y1="502.20" x2="577.80" y2="511.20" stroke="#eeeeee" stroke-width="0.6"/>
<text x="577.80" y="499.20" font-size="8.0" fill="#1a1a1a" font-weight="bold" text-anchor="middle" style="font-family:'Liberation Sans', sans-serif;" stroke="#1a1a1a" stroke-width="0.2">11571</text>
<text x="326.10" y="546.00" font-size="8.0" fill="#1a1a1a" font-weight="bold" text-anchor="middle" style="font-family:'Liberation Sans', sans-serif;" stroke="#1a1a1a" stroke-width="0.2">GrandWave</text>
<text x="326.10" y="554.00" font-size="8.0" fill="#1a1a1a" font-weight="bold" text-anchor="middle" style="font-family:'Liberation Sans', sans-serif;" stroke="#1a1a1a" stroke-width="0.2">Retail</text>
<text x="326.10" y="562.00" font-size="8.0" fill="#1a1a1a" font-weight="bold" text-anchor="middle" style="font-family:'Liberation Sans', sans-serif;" stroke="#1a1a1a" stroke-width="0.2">Center</text>
<text x="377.50" y="546.00" font-size="8.0" fill="#1a1a1a" font-weight="bold" text-anchor="middle" style="font-family:'Liberation Sans', sans-serif;" stroke="#1a1a1a" stroke-width="0.2">Greenstone</text>
<text x="377.50" y="554.00" font-size="8.0" fill="#1a1a1a" font-weight="bold" text-anchor="middle" style="font-family:'Liberation Sans', sans-serif;" stroke="#1a1a1a" stroke-width="0.2">Corporate</text>
<text x="377.50" y="562.00" font-size="8.0" fill="#1a1a1a" font-weight="bold" text-anchor="middle" style="font-family:'Liberation Sans', sans-serif;" stroke="#1a1a1a" stroke-width="0.2">Park</text>
<text x="428.20" y="546.00" font-size="8.0" fill="#1a1a1a" font-weight="bold" text-anchor="middle" style="font-family:'Liberation Sans', sans-serif;" stroke="#1a1a1a" stroke-width="0.2">PrimeView</text>
<text x="428.20" y="554.00" font-size="8.0" fill="#1a1a1a" font-weight="bold" text-anchor="middle" style="font-family:'Liberation Sans', sans-serif;" stroke="#1a1a1a" stroke-width="0.2">Commercial</text>
<text x="428.20" y="562.00" font-size="8.0" fill="#1a1a1a" font-weight="bold" text-anchor="middle" style="font-family:'Liberation Sans', sans-serif;" stroke="#1a1a1a" stroke-width="0.2">Plaza</text>
<text x="479.90" y="546.00" font-size="8.0" fill="#1a1a1a" font-weight="bold" text-anchor="middle" style="font-family:'Liberation Sans', sans-serif;" stroke="#1a1a1a" stroke-width="0.2">SilverLeaf</text>
<text x="479.90" y="554.00" font-size="8.0" fill="#1a1a1a" font-weight="bold" text-anchor="middle" style="font-family:'Liberation Sans', sans-serif;" stroke="#1a1a1a" stroke-width="0.2">Tech</text>
<text x="479.90" y="562.00" font-size="8.0" fill="#1a1a1a" font-weight="bold" text-anchor="middle" style="font-family:'Liberation Sans', sans-serif;" stroke="#1a1a1a" stroke-width="0.2">Square</text>
<text x="531.40" y="546.00" font-size="8.0" fill="#1a1a1a" font-weight="bold" text-anchor="middle" style="font-family:'Liberation Sans', sans-serif;" stroke="#1a1a1a" stroke-width="0.2">Skyline</text>
<text x="531.40" y="554.00" font-size="8.0" fill="#1a1a1a" font-weight="bold" text-anchor="middle" style="font-family:'Liberation Sans', sans-serif;" stroke="#1a1a1a" stroke-width="0.2">Business</text>
<text x="531.40" y="562.00" font-size="8.0" fill="#1a1a1a" font-weight="bold" text-anchor="middle" style="font-family:'Liberation Sans', sans-serif;" stroke="#1a1a1a" stroke-width="0.2">Tower</text>
<text x="701.50" y="217.40" font-size="9.75" fill="#161616" font-weight="bold" text-anchor="middle" style="font-family:'Liberation Sans', sans-serif;" stroke="#161616" stroke-width="0.2">Lease Status Distribution</text>
<path d="M701.40,229.60 A56.4,56.4 0 0 1 743.77,323.23 L722.81,304.81 A28.5,28.5 0 0 0 701.40,257.50 Z" fill="#93c47d"/>
<path d="M743.77,323.23 A56.4,56.4 0 0 1 652.44,313.99 L676.66,300.15 A28.5,28.5 0 0 0 722.81,304.81 Z" fill="#38761d"/>
<path d="M652.44,313.99 A56.4,56.4 0 0 1 701.40,229.60 L701.40,257.50 A28.5,28.5 0 0 0 676.66,300.15 Z" fill="#d9ead3"/>
<text x="741.00" y="271.60" font-size="11.0" fill="#ffffff" font-weight="bold" text-anchor="middle" style="font-family:'Liberation Sans', sans-serif;" stroke="#ffffff" stroke-width="0.35">182</text>
<text x="697.20" y="332.00" font-size="11.0" fill="#e6f2dd" font-weight="bold" text-anchor="middle" style="font-family:'Liberation Sans', sans-serif;" stroke="#e6f2dd" stroke-width="0.35">151</text>
<text x="665.10" y="267.80" font-size="11.0" fill="#333333" font-weight="normal" text-anchor="middle" style="font-family:'Liberation Sans', sans-serif;" stroke="#333333" stroke-width="0.35">166</text>
<circle cx="650.6" cy="357.7" r="4.7" fill="#93c47d"/>
<text x="662.40" y="360.90" font-size="9.65" fill="#1a1a1a" font-weight="bold" text-anchor="start" style="font-family:'Liberation Sans', sans-serif;" stroke="#1a1a1a" stroke-width="0.2">Active</text>
<circle cx="709.3" cy="357.7" r="4.7" fill="#38761d"/>
<text x="721.40" y="360.90" font-size="9.65" fill="#1a1a1a" font-weight="bold" text-anchor="start" style="font-family:'Liberation Sans', sans-serif;" stroke="#1a1a1a" stroke-width="0.2">Expired</text>
<circle cx="665.0" cy="370.9" r="4.7" fill="#d9ead3"/>
<text x="676.90" y="374.00" font-size="9.65" fill="#1a1a1a" font-weight="bold" text-anchor="start" style="font-family:'Liberation Sans', sans-serif;" stroke="#1a1a1a" stroke-width="0.2">Expiring Soon</text>
<text x="698.60" y="411.30" font-size="9.66" fill="#161616" font-weight="bold" text-anchor="middle" style="font-family:'Liberation Sans', sans-serif;" stroke="#161616" stroke-width="0.2">Total Leases by Risk Level</text>
<path d="M698.2,480.5 L698.20,424.10 A56.4,56.4 0 0 1 745.69,510.92 Z" fill="#93c47d"/>
<path d="M698.2,480.5 L745.69,510.92 A56.4,56.4 0 0 1 650.33,510.32 Z" fill="#38761d"/>
<path d="M698.2,480.5 L650.33,510.32 A56.4,56.4 0 0 1 698.20,424.10 Z" fill="#d9ead3"/>
<text x="731.40" y="465.80" font-size="11.0" fill="#ffffff" font-weight="bold" text-anchor="middle" style="font-family:'Liberation Sans', sans-serif;" stroke="#ffffff" stroke-width="0.35">170</text>
<text x="697.80" y="526.80" font-size="11.0" fill="#e6f2dd" font-weight="bold" text-anchor="middle" style="font-family:'Liberation Sans', sans-serif;" stroke="#e6f2dd" stroke-width="0.35">160</text>
<text x="665.20" y="465.00" font-size="11.0" fill="#333333" font-weight="normal" text-anchor="middle" style="font-family:'Liberation Sans', sans-serif;" stroke="#333333" stroke-width="0.35">169</text>
<circle cx="626.0" cy="562.3" r="4.8" fill="#93c47d"/>
<text x="637.90" y="565.20" font-size="9.6" fill="#1a1a1a" font-weight="bold" text-anchor="start" style="font-family:'Liberation Sans', sans-serif;" stroke="#1a1a1a" stroke-width="0.2">High</text>
<circle cx="677.1" cy="562.3" r="4.8" fill="#38761d"/>
<text x="689.00" y="565.20" font-size="9.6" fill="#1a1a1a" font-weight="bold" text-anchor="start" style="font-family:'Liberation Sans', sans-serif;" stroke="#1a1a1a" stroke-width="0.2">Low</text>
<circle cx="726.0" cy="562.3" r="4.8" fill="#d9ead3"/>
<text x="737.90" y="565.20" font-size="9.6" fill="#1a1a1a" font-weight="bold" text-anchor="start" style="font-family:'Liberation Sans', sans-serif;" stroke="#1a1a1a" stroke-width="0.2">Medium</text>
<text x="916.30" y="220.00" font-size="9.75" fill="#161616" font-weight="bold" text-anchor="middle" style="font-family:'Liberation Sans', sans-serif;" stroke="#161616" stroke-width="0.2">Active Leases and&#160; Expired Leases by</text>
<text x="916.30" y="229.70" font-size="9.75" fill="#161616" font-weight="bold" text-anchor="middle" style="font-family:'Liberation Sans', sans-serif;" stroke="#161616" stroke-width="0.2">Location</text>
<rect x="835.00" y="240.00" width="9.60" height="9.00" rx="0" fill="#38761d" />
<text x="854.00" y="247.30" font-size="8.0" fill="#333333" font-weight="bold" text-anchor="start" style="font-family:'Liberation Sans', sans-serif;" >Active Leases</text>
<rect x="921.40" y="240.00" width="9.60" height="9.00" rx="0" fill="#93c47d" />
<text x="938.00" y="247.30" font-size="8.0" fill="#333333" font-weight="bold" text-anchor="start" style="font-family:'Liberation Sans', sans-serif;" >Expired Leases</text>
<path d="M865.1,274.50 h84.59 a2,2 0 0 1 2,2 v11.1 a2,2 0 0 1 -2,2 h-84.59 z" fill="#38761d"/>
<path d="M865.1,291.50 h95.89 a2,2 0 0 1 2,2 v11.1 a2,2 0 0 1 -2,2 h-95.89 z" fill="#93c47d"/>
<text x="947.90" y="285.10" font-size="9.6" fill="#ffffff" font-weight="bold" text-anchor="end" style="font-family:'Liberation Sans', sans-serif;" stroke="#ffffff" stroke-width="0.25">23</text>
<text x="959.19" y="302.10" font-size="9.6" fill="#111111" font-weight="bold" text-anchor="end" style="font-family:'Liberation Sans', sans-serif;" stroke="#111111" stroke-width="0.25">26</text>
<text x="860.80" y="292.70" font-size="8.0" fill="#1a1a1a" font-weight="bold" text-anchor="end" style="font-family:'Liberation Sans', sans-serif;" stroke="#1a1a1a" stroke-width="0.2">Bangalore</text>
<path d="M865.1,326.95 h92.12 a2,2 0 0 1 2,2 v11.1 a2,2 0 0 1 -2,2 h-92.12 z" fill="#38761d"/>
<path d="M865.1,343.95 h80.83 a2,2 0 0 1 2,2 v11.1 a2,2 0 0 1 -2,2 h-80.83 z" fill="#93c47d"/>
<text x="955.43" y="337.55" font-size="9.6" fill="#ffffff" font-weight="bold" text-anchor="end" style="font-family:'Liberation Sans', sans-serif;" stroke="#ffffff" stroke-width="0.25">25</text>
<text x="944.13" y="354.55" font-size="9.6" fill="#111111" font-weight="bold" text-anchor="end" style="font-family:'Liberation Sans', sans-serif;" stroke="#111111" stroke-width="0.25">22</text>
<text x="860.80" y="345.15" font-size="8.0" fill="#1a1a1a" font-weight="bold" text-anchor="end" style="font-family:'Liberation Sans', sans-serif;" stroke="#1a1a1a" stroke-width="0.2">Chennai</text>
<path d="M865.1,379.40 h80.83 a2,2 0 0 1 2,2 v11.1 a2,2 0 0 1 -2,2 h-80.83 z" fill="#38761d"/>
<path d="M865.1,396.40 h88.36 a2,2 0 0 1 2,2 v11.1 a2,2 0 0 1 -2,2 h-88.36 z" fill="#93c47d"/>
<text x="944.13" y="390.00" font-size="9.6" fill="#ffffff" font-weight="bold" text-anchor="end" style="font-family:'Liberation Sans', sans-serif;" stroke="#ffffff" stroke-width="0.25">22</text>
<text x="951.66" y="407.00" font-size="9.6" fill="#111111" font-weight="bold" text-anchor="end" style="font-family:'Liberation Sans', sans-serif;" stroke="#111111" stroke-width="0.25">24</text>
<text x="860.80" y="397.60" font-size="8.0" fill="#1a1a1a" font-weight="bold" text-anchor="end" style="font-family:'Liberation Sans', sans-serif;" stroke="#1a1a1a" stroke-width="0.2">Delhi</text>
<path d="M865.1,431.85 h110.95 a2,2 0 0 1 2,2 v11.1 a2,2 0 0 1 -2,2 h-110.95 z" fill="#38761d"/>
<path d="M865.1,448.85 h58.24 a2,2 0 0 1 2,2 v11.1 a2,2 0 0 1 -2,2 h-58.24 z" fill="#93c47d"/>
<text x="974.25" y="442.45" font-size="9.6" fill="#ffffff" font-weight="bold" text-anchor="end" style="font-family:'Liberation Sans', sans-serif;" stroke="#ffffff" stroke-width="0.25">30</text>
<text x="921.54" y="459.45" font-size="9.6" fill="#111111" font-weight="bold" text-anchor="end" style="font-family:'Liberation Sans', sans-serif;" stroke="#111111" stroke-width="0.25">16</text>
<text x="860.80" y="450.05" font-size="8.0" fill="#1a1a1a" font-weight="bold" text-anchor="end" style="font-family:'Liberation Sans', sans-serif;" stroke="#1a1a1a" stroke-width="0.2">Hyderabad</text>
<path d="M865.1,484.30 h129.78 a2,2 0 0 1 2,2 v11.1 a2,2 0 0 1 -2,2 h-129.78 z" fill="#38761d"/>
<path d="M865.1,501.30 h80.83 a2,2 0 0 1 2,2 v11.1 a2,2 0 0 1 -2,2 h-80.83 z" fill="#93c47d"/>
<text x="993.08" y="494.90" font-size="9.6" fill="#ffffff" font-weight="bold" text-anchor="end" style="font-family:'Liberation Sans', sans-serif;" stroke="#ffffff" stroke-width="0.25">35</text>
<text x="944.13" y="511.90" font-size="9.6" fill="#111111" font-weight="bold" text-anchor="end" style="font-family:'Liberation Sans', sans-serif;" stroke="#111111" stroke-width="0.25">22</text>
<text x="860.80" y="502.50" font-size="8.0" fill="#1a1a1a" font-weight="bold" text-anchor="end" style="font-family:'Liberation Sans', sans-serif;" stroke="#1a1a1a" stroke-width="0.2">Mumbai</text>
<path d="M865.1,536.75 h88.36 a2,2 0 0 1 2,2 v11.1 a2,2 0 0 1 -2,2 h-88.36 z" fill="#38761d"/>
<path d="M865.1,553.75 h58.24 a2,2 0 0 1 2,2 v11.1 a2,2 0 0 1 -2,2 h-58.24 z" fill="#93c47d"/>
<text x="951.66" y="547.35" font-size="9.6" fill="#ffffff" font-weight="bold" text-anchor="end" style="font-family:'Liberation Sans', sans-serif;" stroke="#ffffff" stroke-width="0.25">24</text>
<text x="921.54" y="564.35" font-size="9.6" fill="#111111" font-weight="bold" text-anchor="end" style="font-family:'Liberation Sans', sans-serif;" stroke="#111111" stroke-width="0.25">16</text>
<text x="860.80" y="554.95" font-size="8.0" fill="#1a1a1a" font-weight="bold" text-anchor="end" style="font-family:'Liberation Sans', sans-serif;" stroke="#1a1a1a" stroke-width="0.2">Pune</text>
</svg>
</body></html>
